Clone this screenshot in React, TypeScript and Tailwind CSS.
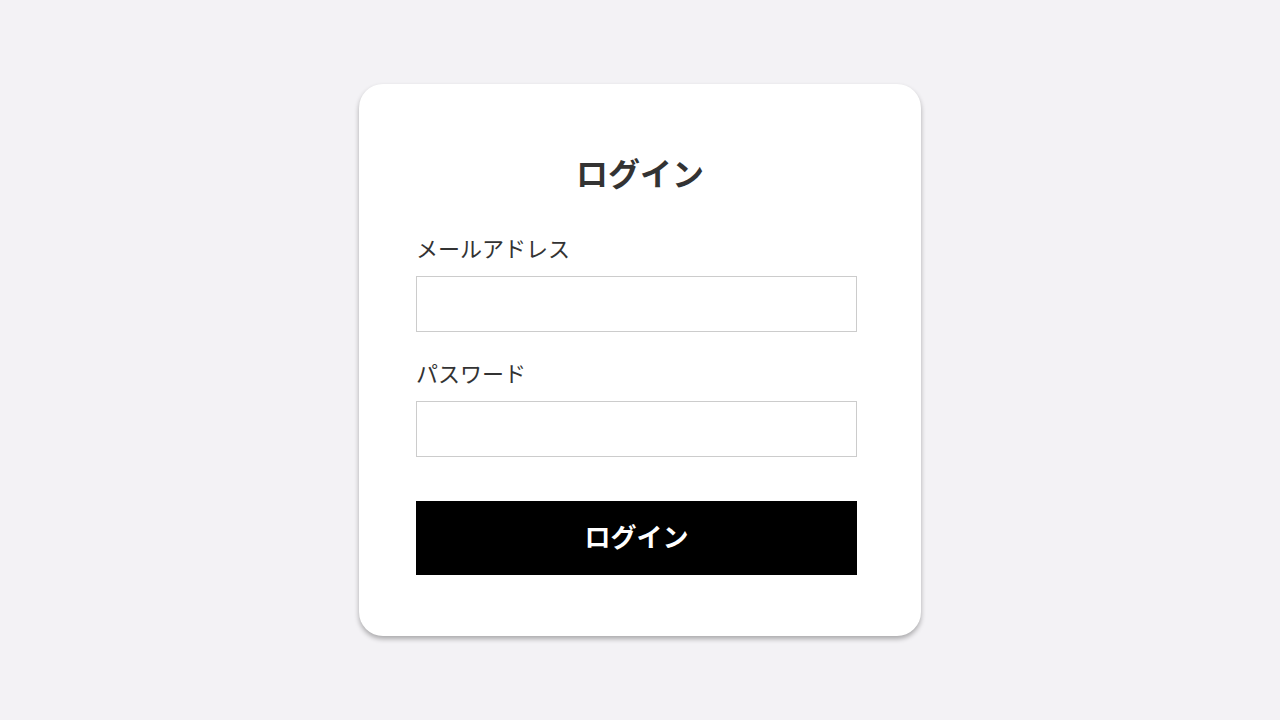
export default function App() {
  const font = { fontFamily: '"Noto Sans CJK JP", "Noto Sans", sans-serif' };
  return (
    <div className="min-h-screen w-full bg-[#f3f2f5] flex justify-center pt-[84px]" style={font}>
      <div className="w-[562px] h-[552px] bg-white rounded-[24px] shadow-[0_3px_5px_rgba(0,0,0,0.3)] pl-[57px] pt-[64px] flex flex-col">
        <h1 className="w-[448px] text-center text-[32px] leading-[48px] font-bold text-[#333]">ログイン</h1>
        <label className="mt-[35px] text-[22px] leading-[33px] text-[#333]">メールアドレス</label>
        <input type="email" className="mt-[12px] w-[441px] h-[56px] border border-[#cccccc] bg-white outline-none" />
        <label className="mt-[24px] text-[22px] leading-[33px] text-[#333]">パスワード</label>
        <input type="password" className="mt-[12px] w-[441px] h-[56px] border border-[#cccccc] bg-white outline-none" />
        <button className="mt-[44px] w-[441px] h-[74px] pb-[5px] bg-black text-white text-[26px] font-bold">ログイン</button>
      </div>
    </div>
  );
}
